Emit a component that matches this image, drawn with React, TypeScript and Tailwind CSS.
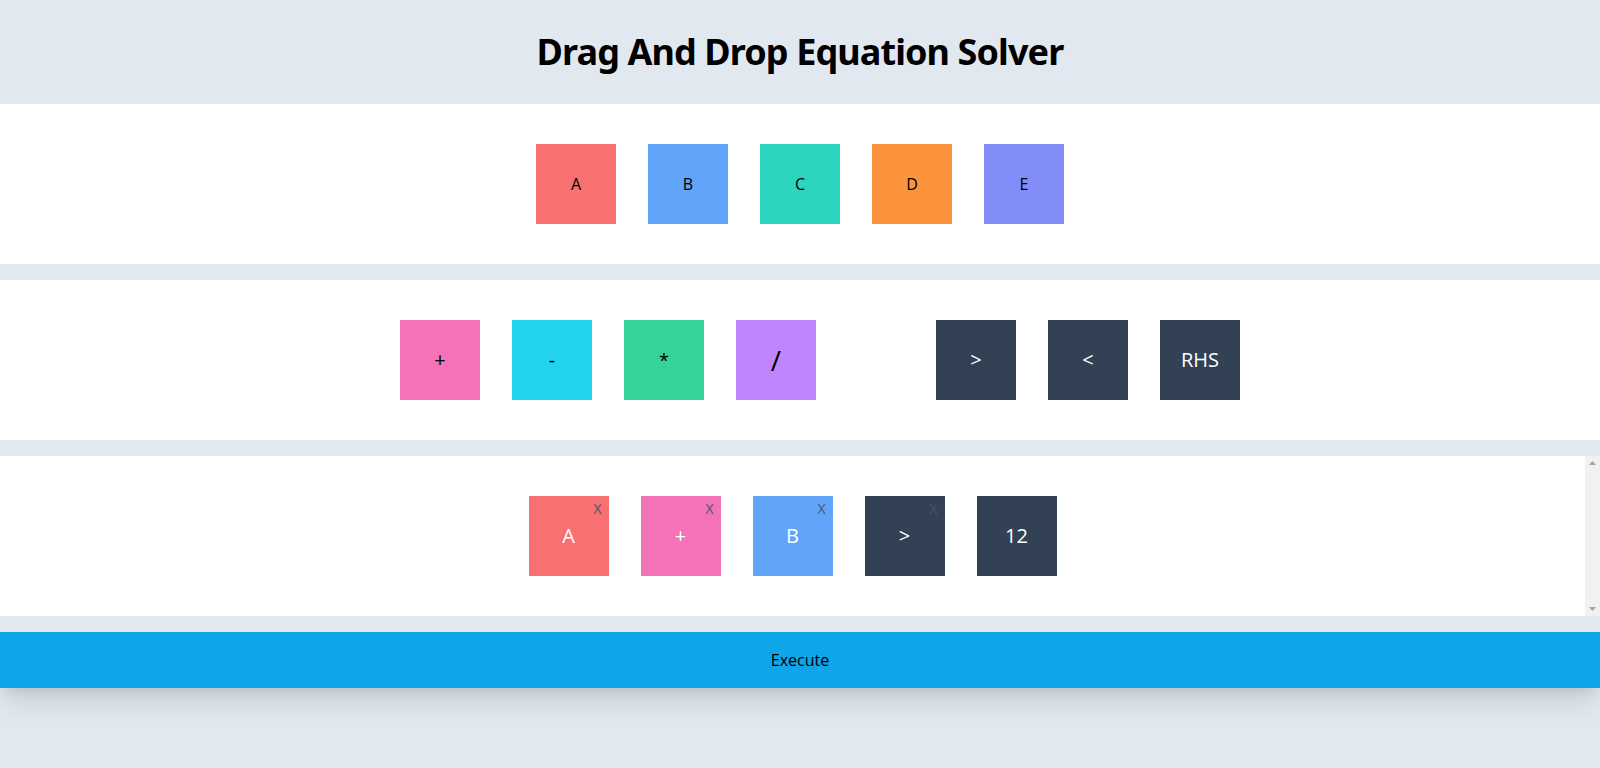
const variables = [
  { label: 'A', color: 'bg-[#f87171]' },
  { label: 'B', color: 'bg-[#60a5fa]' },
  { label: 'C', color: 'bg-[#2dd4bf]' },
  { label: 'D', color: 'bg-[#fb923c]' },
  { label: 'E', color: 'bg-[#818cf8]' },
];

const operators = [
  { label: '+', color: 'bg-[#f472b6]', size: 'text-xl' },
  { label: '-', color: 'bg-[#22d3ee]', size: 'text-xl' },
  { label: '*', color: 'bg-[#34d399]', size: 'text-lg' },
  { label: '/', color: 'bg-[#c084fc]', size: 'text-[28px]' },
];

const comparators = ['>', '<', 'RHS'];

const equation = [
  { label: 'A', color: 'bg-[#f87171]', removable: true },
  { label: '+', color: 'bg-[#f472b6]', removable: true },
  { label: 'B', color: 'bg-[#60a5fa]', removable: true },
  { label: '>', color: 'bg-[#334155]', removable: true },
  { label: '12', color: 'bg-[#334155]', removable: false },
];

const Tile = ({ color, className, children }: { color: string; className?: string; children: React.ReactNode }) => (
  <div className={`relative w-20 h-20 flex items-center justify-center shrink-0 ${color} ${className ?? ''}`}>
    {children}
  </div>
);

const Scrollbar = () => (
  <div className="w-[15px] bg-[#f1f1f1] flex flex-col items-center justify-between py-[5px]">
    <svg width="7" height="4" viewBox="0 0 7 4">
      <path d="M3.5 0L7 4H0z" fill="#a3a3a3" />
    </svg>
    <svg width="7" height="4" viewBox="0 0 7 4">
      <path d="M0 0h7L3.5 4z" fill="#a3a3a3" />
    </svg>
  </div>
);

export default function App() {
  return (
    <div className="min-h-screen bg-[#e2e8f0] font-['Open_Sans',sans-serif]">
      <header className="h-[104px] flex items-center justify-center">
        <h1 className="text-4xl font-bold text-black font-['Noto_Sans',sans-serif] tracking-tight">
          Drag And Drop Equation Solver
        </h1>
      </header>

      <section className="bg-white h-40 flex items-center justify-center gap-8">
        {variables.map((v) => (
          <Tile key={v.label} color={v.color} className="text-base text-black">
            {v.label}
          </Tile>
        ))}
      </section>

      <section className="mt-4 bg-white h-40 flex items-center justify-center gap-[120px] pl-10">
        <div className="flex gap-8">
          {operators.map((o) => (
            <Tile key={o.label} color={o.color} className={`${o.size} text-black`}>
              {o.label}
            </Tile>
          ))}
        </div>
        <div className="flex gap-8">
          {comparators.map((c) => (
            <Tile key={c} color="bg-[#334155]" className="text-xl text-white">
              {c}
            </Tile>
          ))}
        </div>
      </section>

      <section className="mt-4 bg-white h-40 flex">
        <div className="flex-1 flex items-center justify-center gap-8">
          {equation.map((e, i) => (
            <Tile key={i} color={e.color} className="text-xl text-white">
              {e.label}
              {e.removable && (
                <span className="absolute top-[3px] right-[7px] text-sm text-[#475569]">X</span>
              )}
            </Tile>
          ))}
        </div>
        <Scrollbar />
      </section>

      <button className="mt-4 w-full h-14 bg-[#0ea5e9] text-black text-base shadow-xl">
        Execute
      </button>
    </div>
  );
}
